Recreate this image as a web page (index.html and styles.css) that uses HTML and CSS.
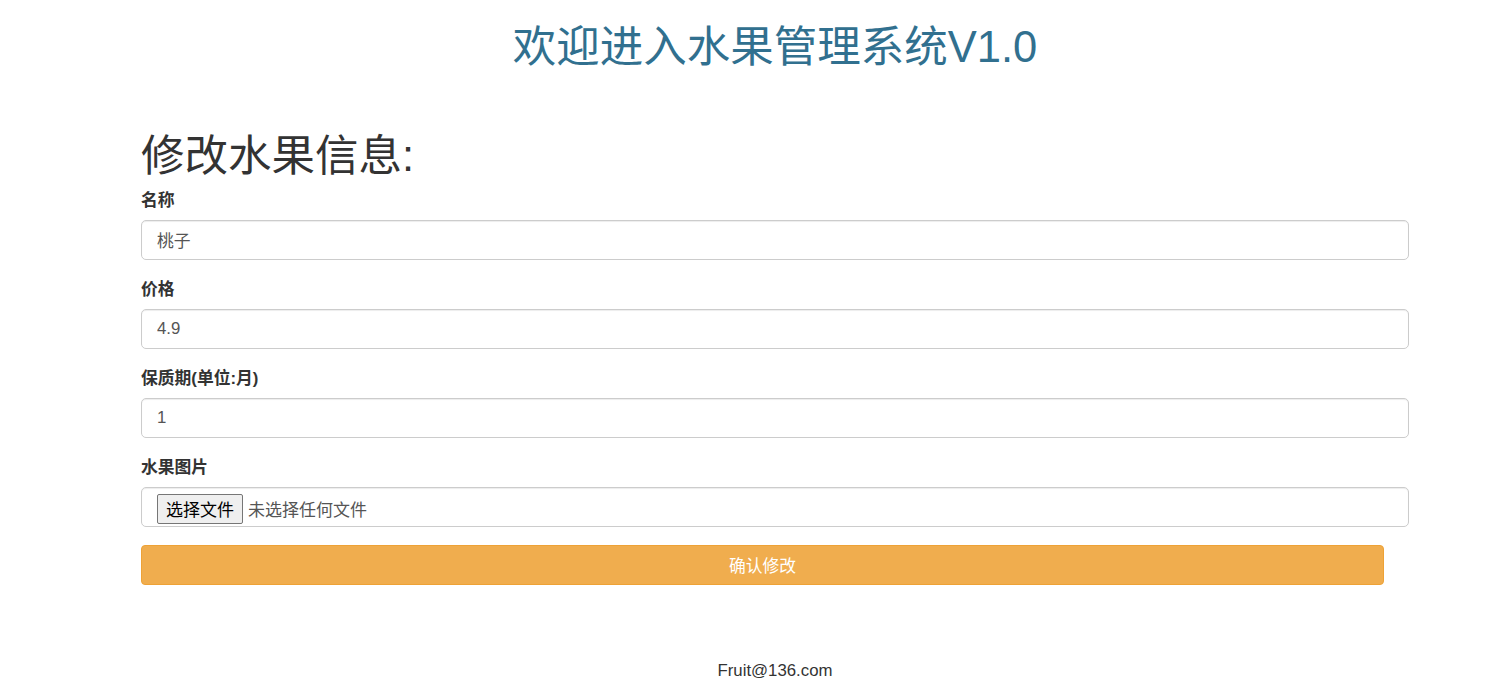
FILE: index.html
```html
<!DOCTYPE html>
<html lang="zh-CN">
<head>
    <meta charset="UTF-8">
    <title>修改水果信息</title>
    <link rel="stylesheet" href="styles.css">
</head>
<body>
<div class="container">
    <h1 class="title">欢迎进入水果管理系统V1.0</h1>
    <h1 class="sub_title">修改水果信息:</h1>
    <form class="fruit_form">
        <div class="form-group">
            <label>名称</label>
            <input class="form-control" type="text" value="桃子">
        </div>
        <div class="form-group">
            <label>价格</label>
            <input class="form-control" type="text" value="4.9">
        </div>
        <div class="form-group">
            <label>保质期(单位:月)</label>
            <input class="form-control" type="text" value="1">
        </div>
        <div class="form-group">
            <label>水果图片</label>
            <div class="form-control file_box">
                <button type="button" class="file_btn">选择文件</button>
                <span class="file_name">未选择任何文件</span>
            </div>
        </div>
        <button type="button" class="btn btn-warning">确认修改</button>
    </form>
    <p class="footer">Fruit@136.com</p>
</div>
</body>
</html>
```

FILE: styles.css
```css
* {
    margin: 0;
    padding: 0;
    box-sizing: border-box;
}
body {
    font-family: "Liberation Sans", Arial, "Noto Sans CJK SC", sans-serif;
    font-size: 16.8px;
    color: #333;
    background-color: #fff;
}
.container {
    width: 1268px;
    margin-left: 141px;
    padding-top: 23px;
}
.title {
    font-size: 43.5px;
    font-weight: normal;
    line-height: 48px;
    color: #31708f;
    text-align: center;
}
.sub_title {
    font-size: 43.5px;
    font-weight: normal;
    line-height: 48px;
    margin-top: 61px;
}
.fruit_form {
    display: flex;
    flex-direction: column;
    margin-top: 11px;
}
.form-group {
    display: flex;
    flex-direction: column;
    gap: 9px;
    margin-bottom: 20px;
}
.form-group label {
    font-size: 16.8px;
    font-weight: bold;
    line-height: 20px;
}
.form-control {
    width: 100%;
    height: 40px;
    padding: 0 15px;
    font-family: inherit;
    font-size: 16.8px;
    color: #555;
    background-color: #fff;
    border: 1px solid #ccc;
    border-radius: 5px;
    box-shadow: inset 0 1px 1px rgba(0, 0, 0, .075);
    outline: none;
}
.file_box {
    display: flex;
    align-items: center;
    gap: 5px;
    padding-top: 3px;
}
.file_btn {
    height: 30px;
    padding: 0 8px;
    font-family: inherit;
    font-size: 17px;
    color: #000;
    background-color: #efefef;
    border: 1px solid #767676;
    border-radius: 2px;
}
.file_name {
    font-size: 17px;
    color: #555;
}
.btn {
    width: 1243px;
    height: 40px;
    margin-top: -2px;
    font-family: inherit;
    font-size: 16.8px;
    color: #fff;
    border-radius: 4px;
    cursor: pointer;
}
.btn-warning {
    background-color: #f0ad4e;
    border: 1px solid #eea236;
}
.footer {
    margin-top: 76px;
    line-height: 20px;
    text-align: center;
    font-size: 16.8px;
}
```
